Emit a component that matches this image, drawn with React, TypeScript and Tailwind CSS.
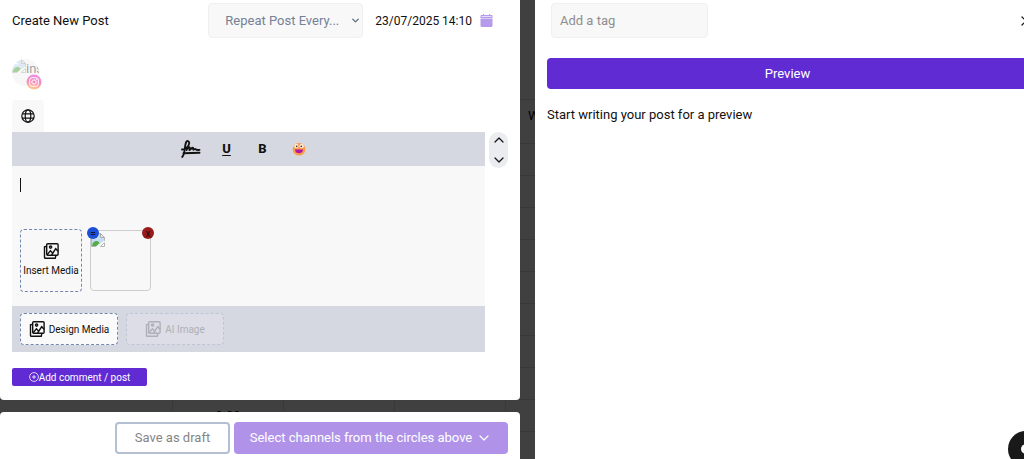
import { useState } from "react";
import type { ReactNode } from "react";
import { ChevronDown, ChevronRight, ChevronUp } from "lucide-react";

const HOURS = ["", "", "", "", "", "", "", "", "0:00", ""];

function MediaIcon({ className }: { className: string }) {
  return (
    <svg viewBox="0 0 16 16" className={className} fill="none" stroke="currentColor" strokeWidth="1.4" aria-hidden="true">
      <rect x="3.7" y="0.8" width="11.4" height="11.4" rx="1" />
      <path d="M3.7 3.2 1.5 3.8v10.6c0 .5.4.9.9.9h9.8l.8-3.1" />
      <path d="m4 11.9 3.4-4.1 2.2 2.1M8.6 12l4.1-6.3 2.4 2.6" />
      <circle cx="7.6" cy="4.1" r="1.1" />
    </svg>
  );
}

function SignatureIcon() {
  return (
    <svg viewBox="0 0 20 18" className="h-[18px] w-5" fill="none" stroke="currentColor" strokeWidth="1.9" strokeLinecap="round" strokeLinejoin="round" aria-hidden="true">
      <path d="M1 9.500c3-.2 7-2.700 7.200-6.200C8.300.7 6 .2 5 2.500 3.700 5.500 4 11 2.600 14.500c-.4 1-.8 1.800-1.300 2.400" />
      <path d="M5.500 10c1.500-2.500 3.300-3.500 3.300-2 0 1.200-1.300 3 .5 1.500 1-.9 2.200-2.500 2.700-1.700.4.700-.4 2.500 1 1.700.9-.6 1.300-1 1.800-.3.500.8 1.600.9 3.700.7" />
      <path d="M2.500 13.300 18.500 12.700" />
    </svg>
  );
}

function GlobeIcon() {
  return (
    <svg viewBox="0 0 14 14" className="size-3.5" fill="none" stroke="currentColor" strokeWidth="1.2" aria-hidden="true">
      <circle cx="7" cy="7" r="6.2" />
      <ellipse cx="7" cy="7" rx="2.8" ry="6.2" />
      <path d="M1.200 4.900h11.600M1.200 9.100h11.600" />
    </svg>
  );
}

function InstagramIcon() {
  return (
    <svg viewBox="0 0 16 16" className="size-4" fill="none" aria-hidden="true">
      <defs>
        <linearGradient id="instagram" x1="0.6" y1="0" x2="0.4" y2="1">
          <stop offset="0" stopColor="#ef8cf0" />
          <stop offset="0.55" stopColor="#fa8fb4" />
          <stop offset="1" stopColor="#fdd08a" />
        </linearGradient>
      </defs>
      <circle cx="8" cy="8" r="7.5" fill="url(#instagram)" />
      <rect x="3.7" y="3.7" width="8.6" height="8.6" rx="2.5" stroke="#fff" />
      <circle cx="8" cy="8" r="2.2" stroke="#fff" />
      <circle cx="10.5" cy="5.5" r="0.6" fill="#fff" />
    </svg>
  );
}

function BrokenImageIcon({ className }: { className: string }) {
  return (
    <svg viewBox="0 0 14 14" className={className} aria-hidden="true">
      <path d="M.5.500h9l4 4v4L6 13.500H.5z" fill="#c6dcf6" stroke="#b4b4b4" />
      <path d="M1 13c.5-4 3-5.500 5-5s2.500 2 2.500 2L6 13z" fill="#55ad43" />
      <path d="M3 5c0-1.500 2-2 2.500-.8C7 4 7 5.500 6 5.500H3.500z" fill="#fff" />
      <path d="M9.500.500v4h4z" fill="#eee" stroke="#aaa" />
      <path d="m13.500 9.500-4 4h4z" fill="#fff" stroke="#b4b4b4" />
      <path d="m5.500 13.800 8.300-5.600" stroke="#f8f8f8" strokeWidth="1.5" />
    </svg>
  );
}

function CalendarIcon() {
  return (
    <svg viewBox="0 0 13 13" className="size-[13px] text-[#b69bec]" aria-hidden="true">
      <path fill="currentColor" d="M1.500 1h10c.7 0 1 .4 1 1v2H.500V2c0-.6.300-1 1-1ZM.500 4.500h12v7.300c0 .7-.4 1.200-1.100 1.200H1.600c-.7 0-1.100-.5-1.100-1.200Z" />
      <path stroke="currentColor" d="M3.500 0v2M9.500 0v2" />
      <path stroke="#e6dcfb" d="M1.500 2.500h10" />
    </svg>
  );
}

function EmojiIcon() {
  return (
    <svg viewBox="0 0 14 14" className="size-3.5" aria-hidden="true">
      <circle cx="7" cy="7.3" r="6.3" fill="#fb9b45" />
      <circle cx="4.4" cy="4.2" r="2.1" fill="#fff3e0" />
      <circle cx="9.6" cy="4.2" r="2.1" fill="#fff3e0" />
      <circle cx="4.7" cy="4.3" r="0.9" fill="#4b2a3a" />
      <circle cx="9.3" cy="4.3" r="0.9" fill="#4b2a3a" />
      <path d="M3 7.500h8c0 2.400-1.600 3.800-4 3.800S3 9.900 3 7.500Z" fill="#ae18a8" />
    </svg>
  );
}

function ToolButton({ label, children }: { label: string; children: ReactNode }) {
  return (
    <button type="button" aria-label={label} className="flex h-5 w-5 items-center justify-center text-[13px] font-extrabold">
      {children}
    </button>
  );
}

function Backdrop() {
  return (
    <div aria-hidden="true" className="absolute inset-0 overflow-hidden bg-[#404040] pt-[99px] text-[13px] text-black">
      <div className="h-11 border-t border-[#393939] pt-1.5">
        <span className="ml-[528px]">W</span>
      </div>
      {HOURS.map((hour, i) => (
        <div key={i} className="flex h-8 border-t border-[#393939]">
          <div className="w-[173px] border-r border-[#393939]" />
          <div className="flex w-[111px] items-center justify-center border-r border-[#393939]">{hour}</div>
          <div className="w-[111px] border-r border-[#393939]" />
          <div className="w-[111px] border-r border-[#393939]" />
        </div>
      ))}
    </div>
  );
}

function Editor() {
  const [text, setText] = useState("");

  return (
    <div className="flex items-start gap-1">
      <div className="min-w-0 flex-1">
        <div className="flex h-[34px] items-center justify-center gap-4 bg-[#d5d8e1] pr-2">
          <ToolButton label="Signature"><SignatureIcon /></ToolButton>
          <ToolButton label="Underline"><span className="underline underline-offset-2">U</span></ToolButton>
          <ToolButton label="Bold">B</ToolButton>
          <ToolButton label="Emoji"><EmojiIcon /></ToolButton>
        </div>
        <div className="relative bg-[#f8f8f8] px-2 pt-2 pb-3.5">
          <textarea
            aria-label="Post content"
            value={text}
            onChange={(e) => setText(e.target.value)}
            className="peer block h-[53px] w-full resize-none text-[14px] leading-5 outline-none"
          />
          {text === "" && <span className="pointer-events-none absolute top-3 left-2 h-3.5 w-px bg-[#111] peer-focus:hidden" />}
          <div className="flex gap-2 pt-0.5">
            <button
              type="button"
              className="flex h-[63px] w-[62px] flex-col items-center justify-center gap-1 rounded-sm border border-dashed border-[#7388af] text-[10px] whitespace-nowrap"
            >
              <MediaIcon className="size-4" />
              Insert Media
            </button>
            <div className="relative mt-px h-[61px] w-[61px] rounded-sm border border-[#cecece]">
              <BrokenImageIcon className="mt-0.5 size-3.5" />
              <button type="button" aria-label="Move" className="absolute -top-1 -left-1 flex size-3 items-center justify-center rounded-full bg-[#1d4ed8] text-[10px]">
                =
              </button>
              <button type="button" aria-label="Remove" className="absolute -top-1 -right-1 flex size-3 items-center justify-center rounded-full bg-[#991b1b] text-[10px]">
                x
              </button>
            </div>
          </div>
        </div>
        <div className="flex gap-2 bg-[#d5d8e1] px-2 py-[7px]">
          <button type="button" className="flex h-8 w-[98px] items-center justify-center gap-1 rounded-sm border border-dashed border-[#7388af] bg-[#fafafa] text-[10px] whitespace-nowrap">
            <MediaIcon className="size-4" />
            Design Media
          </button>
          <button type="button" disabled className="flex h-8 w-[98px] items-center justify-center gap-1 rounded-sm border border-dashed border-[#bdc5d6] bg-[#dcdde6] text-[10px] text-[#aeb0b7]">
            <MediaIcon className="size-4" />
            AI Image
          </button>
        </div>
      </div>
      <div className="flex w-[19px] flex-col items-center gap-1 rounded-full bg-[#ebecef]">
        <button type="button" aria-label="Move up"><ChevronUp size={16} strokeWidth={1.8} /></button>
        <button type="button" aria-label="Move down"><ChevronDown size={16} strokeWidth={1.8} /></button>
      </div>
    </div>
  );
}

export default function App() {
  const [tag, setTag] = useState("");

  return (
    <div className="relative min-h-screen overflow-hidden font-['Roboto',sans-serif] text-[13px] text-[#111]">
      <Backdrop />
      <div className="relative flex min-h-screen gap-[15px]">
        <main className="flex w-[51%] max-w-[520px] shrink-0 flex-col gap-3">
          <section className="rounded-b-sm bg-white px-3 pt-[3px] pb-3.5">
            <header className="flex items-center">
              <h1 className="flex-1 text-[13px]">Create New Post</h1>
              <div className="relative">
                <select aria-label="Repeat post" className="h-[35px] w-[155px] appearance-none rounded-sm border border-[#f0f0f0] bg-[#f8f8f8] pl-4 text-[#748197]">
                  <option>Repeat Post Every...</option>
                </select>
                <ChevronDown size={11} strokeWidth={3} className="pointer-events-none absolute top-3 right-0.5 text-[#5f6b80]" />
              </div>
              <button type="button" className="ml-3 flex items-center gap-2 pr-[15px] text-[12px]">
                23/07/2025 14:10
                <CalendarIcon />
              </button>
            </header>
            <button type="button" aria-label="Instagram channel" className="relative mt-[21px] flex size-8 items-start text-left">
              <span className="flex size-[27px] items-start overflow-hidden rounded-full bg-[#f7f7f7] text-[13px] text-[#a3a3a3]">
                <BrokenImageIcon className="size-3.5 shrink-0 opacity-50" />
                ins
              </span>
              <span className="absolute top-[15px] left-3.5"><InstagramIcon /></span>
            </button>
            <button type="button" aria-label="Global" className="mt-[9px] flex size-8 items-center justify-center rounded-t-sm bg-[#f8f8f8]">
              <GlobeIcon />
            </button>
            <Editor />
            <button type="button" className="mt-4 flex h-[18px] w-[135px] items-center justify-center rounded-xs bg-[#612bd3] text-[10px] text-white">
              <svg viewBox="0 0 10 10" className="size-2.5" fill="none" stroke="currentColor" strokeWidth="0.8" aria-hidden="true">
                <circle cx="5" cy="5" r="4.4" />
                <path d="M3 5h4M5 3v4" />
              </svg>
              Add comment / post
            </button>
          </section>
          <footer className="flex flex-1 items-start justify-end gap-1 rounded-t-sm bg-white px-3 pt-2.5 pb-1">
            <button type="button" className="h-8 w-[115px] rounded-sm border-2 border-[#b4bfd1] text-[#858585]">Save as draft</button>
            <button type="button" className="flex h-8 w-[274px] items-center justify-center gap-1 rounded-sm bg-[#b093e9] text-white">
              Select channels from the circles above
              <ChevronDown size={16} strokeWidth={1.8} />
            </button>
          </footer>
        </main>
        <aside className="min-w-0 flex-1 overflow-hidden bg-white pt-[3px] pl-3">
          <div className="flex items-center justify-between pl-1">
            <input
              aria-label="Add a tag"
              placeholder="Add a tag"
              value={tag}
              onChange={(e) => setTag(e.target.value)}
              className="h-[35px] w-[157px] rounded-sm border border-[#f0f0f0] bg-[#f8f8f8] px-2 placeholder:text-[#8e8e8e]"
            />
            <button type="button" aria-label="Next" className="-mr-2"><ChevronRight size={16} strokeWidth={1.8} /></button>
          </div>
          <div className="-mr-1 mt-5 flex h-[31px] items-center justify-center rounded-sm bg-[#612bd3] text-white">
            <h2>Preview</h2>
          </div>
          <p className="mt-4">Start writing your post for a preview</p>
        </aside>
      </div>
      <button type="button" aria-label="Support chat" className="absolute -right-5 -bottom-2 flex size-9 items-center justify-center rounded-full bg-[#191919]">
        <span className="size-2.5 rounded-full bg-white" />
      </button>
    </div>
  );
}
